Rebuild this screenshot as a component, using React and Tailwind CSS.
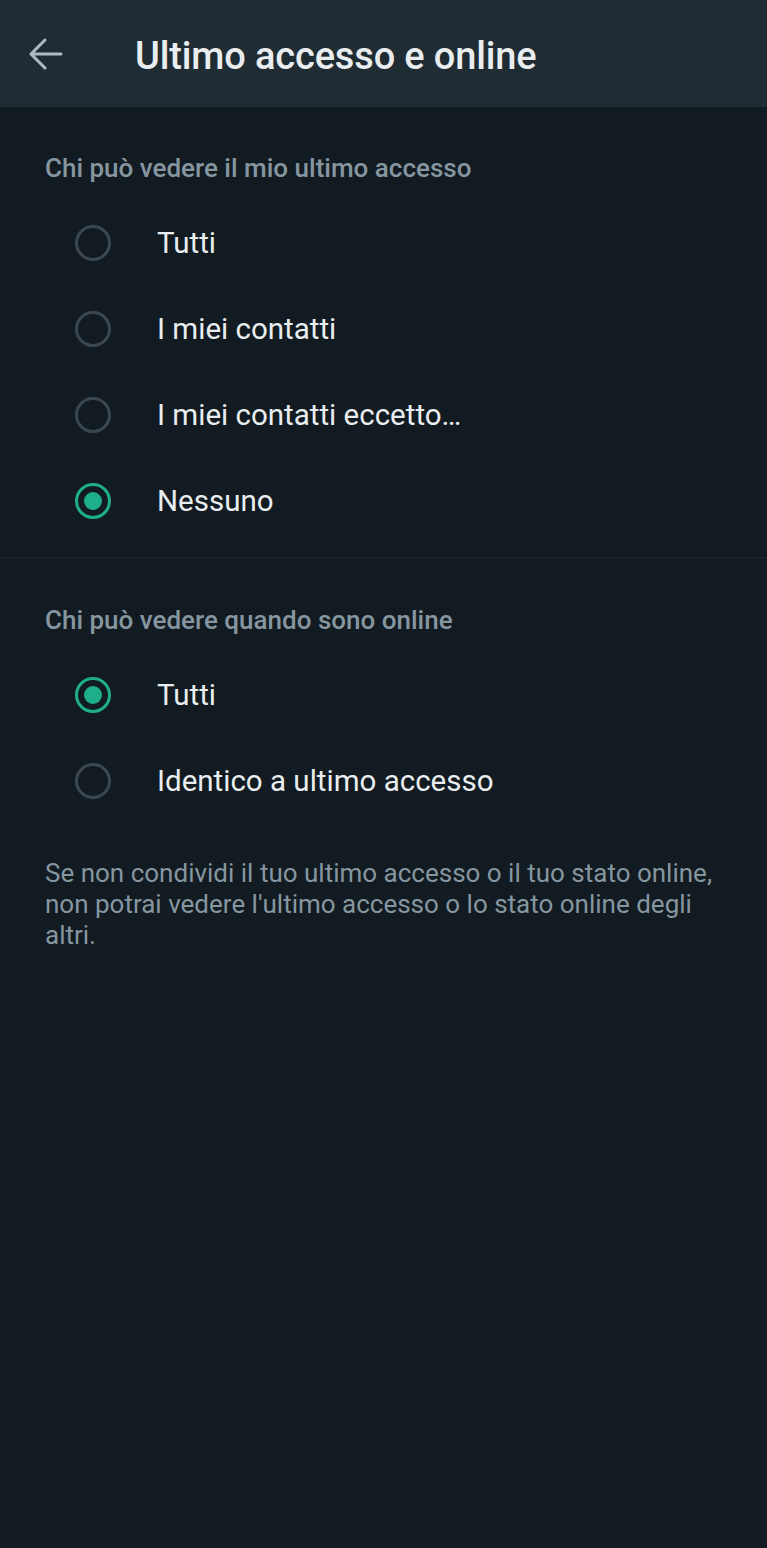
import React from 'react';

const font = { fontFamily: 'Roboto, "Noto Sans", sans-serif' };

function Radio({ checked }) {
  if (checked) {
    return (
      <div className="w-[36px] h-[36px] rounded-full border-[3px] border-[#1fae8a] flex items-center justify-center">
        <div className="w-[18px] h-[18px] rounded-full bg-[#1fae8a]" />
      </div>
    );
  }
  return <div className="w-[36px] h-[36px] rounded-full border-[3px] border-[#3a4750]" />;
}

function Option({ label, checked }) {
  return (
    <div className="h-[86px] flex items-center pl-[75px]">
      <Radio checked={checked} />
      <span className="ml-[46px] text-[29.5px] text-[#e9edef]">{label}</span>
    </div>
  );
}

export default function App() {
  return (
    <div className="w-[767px] min-h-[1548px] bg-[#111b21]" style={font}>
      {/* Header */}
      <header className="h-[107px] bg-[#202c33] flex items-center">
        <svg className="ml-[29px]" width="34" height="32" viewBox="0 0 34 32" fill="none">
          <path d="M2 16 H32 M16 2 L2 16 L16 30" stroke="#aebac1" strokeWidth="3" strokeLinecap="round" strokeLinejoin="round" />
        </svg>
        <h1 className="ml-[72px] text-[38px] leading-[44px] font-medium text-[#e9edef] tracking-[-0.15px] pt-[5px]">Ultimo accesso e online</h1>
      </header>

      {/* Last seen */}
      <section className="pt-[45px] pb-[13px] border-b border-[#1c272e]">
        <p className="pl-[45px] text-[26px] leading-[32px] font-medium text-[#8696a0]">Chi può vedere il mio ultimo accesso</p>
        <div className="mt-[16px]">
          <Option label="Tutti" />
          <Option label="I miei contatti" />
          <Option label="I miei contatti eccetto…" />
          <Option label="Nessuno" checked />
        </div>
      </section>

      {/* Online */}
      <section className="pt-[46px]">
        <p className="pl-[45px] text-[26px] leading-[32px] font-medium text-[#8696a0]">Chi può vedere quando sono online</p>
        <div className="mt-[16px]">
          <Option label="Tutti" checked />
          <Option label="Identico a ultimo accesso" />
        </div>
        <p className="mt-[34px] pl-[45px] pr-[40px] text-[26px] leading-[31px] text-[#8696a0]">
          Se non condividi il tuo ultimo accesso o il tuo stato online, non potrai vedere l'ultimo accesso o lo stato online degli altri.
        </p>
      </section>
    </div>
  );
}
